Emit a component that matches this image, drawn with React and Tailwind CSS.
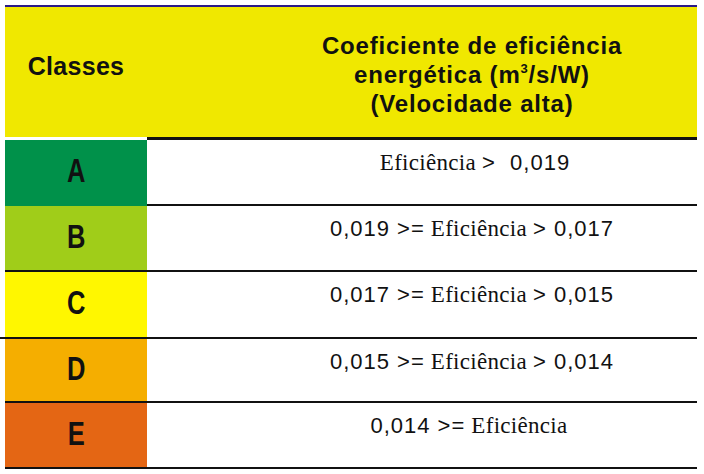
import React from "react";

const rows = [
  { cls: "A", bg: "bg-[#00914a]", h: "h-[64px]", line: "right" },
  { cls: "B", bg: "bg-[#a0cd19]", h: "h-[64px]", line: "full" },
  { cls: "C", bg: "bg-[#fff700]", h: "h-[65px]", line: "wide" },
  { cls: "D", bg: "bg-[#f5ae00]", h: "h-[62px]", line: "full" },
  { cls: "E", bg: "bg-[#e46614]", h: "h-[64px]", line: "full" },
];

const Num = ({ children }) => (
  <span className="font-['Liberation_Sans',Arial,sans-serif] tracking-[1px]">
    {children}
  </span>
);

const Ef = () => (
  <span className="font-['Liberation_Serif','Times_New_Roman',serif] text-[23px] tracking-[0.3px] mx-[6px]">
    Eficiência
  </span>
);

const texts = [
  <>
    <Ef />
    <Num>&gt;&nbsp;&nbsp;0,019</Num>
  </>,
  <>
    <Num>0,019 &gt;=</Num>
    <Ef />
    <Num>&gt; 0,017</Num>
  </>,
  <>
    <Num>0,017 &gt;=</Num>
    <Ef />
    <Num>&gt; 0,015</Num>
  </>,
  <>
    <Num>0,015 &gt;=</Num>
    <Ef />
    <Num>&gt; 0,014</Num>
  </>,
  <>
    <Num>0,014 &gt;=</Num>
    <Ef />
  </>,
];

const Separator = ({ type, bg }) => {
  if (type === "right") {
    return (
      <div className="flex h-[2px]">
        <div className={`w-[142px] ${bg}`} />
        <div className="flex-1 bg-[#111]" />
      </div>
    );
  }
  if (type === "wide") {
    return <div className="h-[2px] -ml-[5px] bg-[#111]" />;
  }
  return <div className="h-[2px] bg-[#111]" />;
};

export default function App() {
  return (
    <div className="w-[704px] h-[474px] bg-white pt-[5px] pl-[5px] text-[#111]">
      <div className="w-[692px]">
        <div className="h-[2px] bg-[#2b1a87]" />
        <div className="flex h-[130px] bg-[#f0e800] font-['Liberation_Sans',Arial,sans-serif] font-bold">
          <div className="w-[142px] flex items-center justify-center pb-[10px] text-[25px] tracking-[0.3px]">
            Classes
          </div>
          <div className="flex-1 flex flex-col items-center justify-center pl-[100px] pb-[2px] pt-[6px] text-[24px] leading-[29px] tracking-[0.8px] text-center">
            <span>Coeficiente de eficiência</span>
            <span>
              energética (m<sup className="text-[13px] -top-[10px]">3</sup>/s/W)
            </span>
            <span>(Velocidade alta)</span>
          </div>
        </div>
        <div className="flex h-[3px]">
          <div className="w-[142px] bg-white" />
          <div className="flex-1 bg-[#111]" />
        </div>
        {rows.map((row, i) => (
          <div key={row.cls}>
            <div className={`flex ${row.h}`}>
              <div
                className={`w-[142px] ${row.bg} flex items-center justify-center pb-[4px]`}
              >
                <span className="inline-block font-['Liberation_Sans',Arial,sans-serif] font-bold text-[34px] scale-x-75">
                  {row.cls}
                </span>
              </div>
              <div className="flex-1 flex justify-center pl-[100px] pt-[5px] text-[22px] whitespace-nowrap">
                <div>{texts[i]}</div>
              </div>
            </div>
            <Separator type={row.line} bg={row.bg} />
          </div>
        ))}
      </div>
    </div>
  );
}
